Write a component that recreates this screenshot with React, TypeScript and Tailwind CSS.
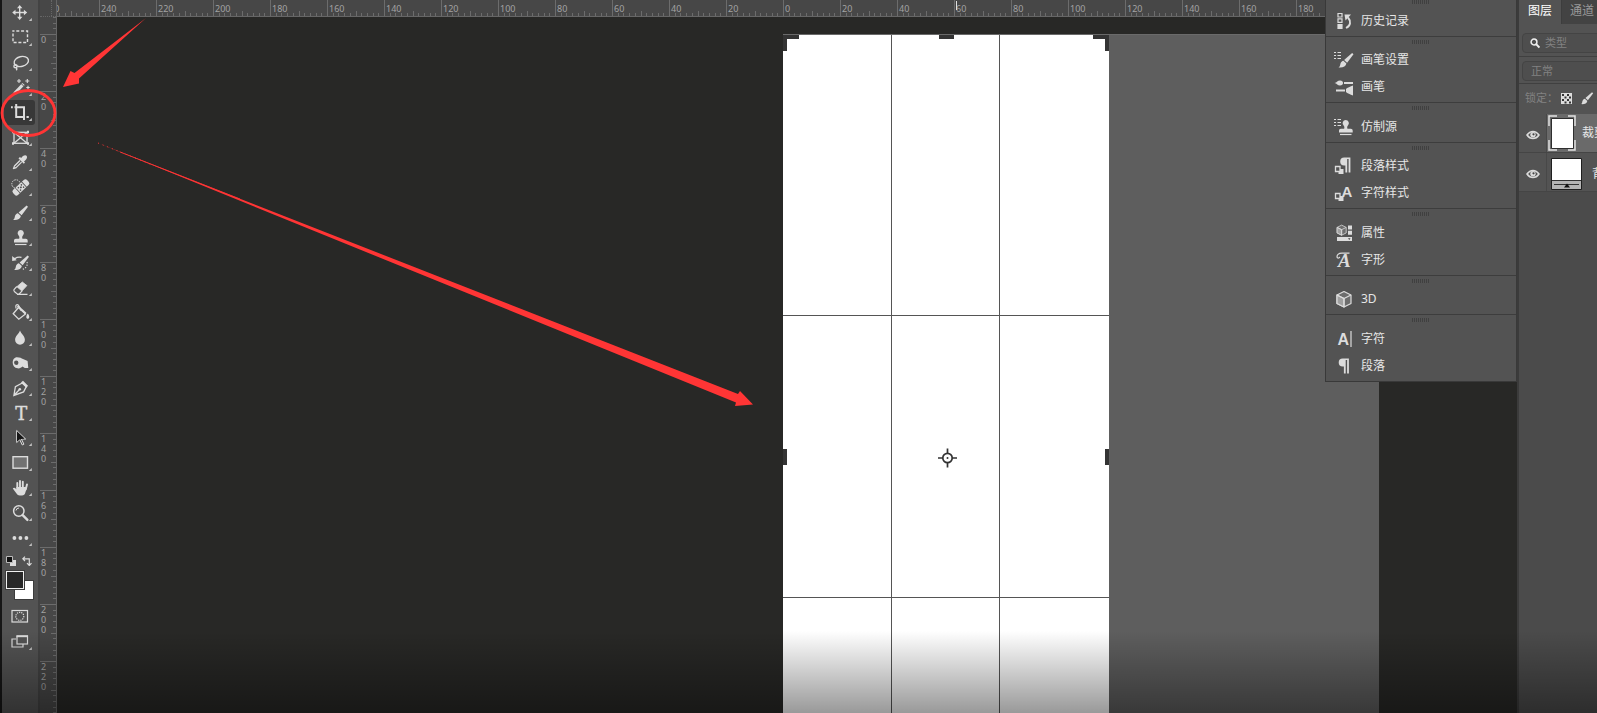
import type { ReactNode } from 'react';
import clsx from 'clsx';

type Item = { label: string; icon: ReactNode };

const INK = '#dcdcdc';
const TICKS = [1, 2, 3, 4, 5, 6, 7, 8, 9];

const brush = (
  <>
    <path d="M24.6 5.4 26 6.8 19.6 15.2 16.6 12.6Z" fill={INK} />
    <path d="M15.9 13.3 18.9 16c-.6 3-3.6 4.4-7.900 3.900 1.700-.6 1.500-2 2-3.800.4-1.600 1.600-2.600 2.900-2.800Z" fill={INK} />
  </>
);

const stamp = (
  <>
    <path d="M18.700 5a3.200 3.200 0 0 1 2.200 5.500c-.8.9-.9 2.300-.4 3.200h3.300c1.200 0 1.900.8 1.900 2V17.500H12V15.700c0-1.200.7-2 1.900-2h3.200c.5-.9.3-2.300-.5-3.200A3.200 3.200 0 0 1 18.700 5Z" fill={INK} />
    <path d="M13 19.500h11.500" stroke={INK} strokeWidth="1.200" />
  </>
);

const tools: Item[] = [
  {
    label: '移动工具',
    icon: (
      <g fill={INK} stroke="none">
        <path d="M17 7h1.400v11H17zM12 11.800h11v1.400H12z" />
        <path d="m17.700 5 2.700 3.300H15zM17.700 20l2.700-3.300H15zM10.200 12.500l3.300-2.700v5.400zM25.200 12.500l-3.300-2.700v5.400z" />
      </g>
    ),
  },
  { label: '矩形选框工具', icon: <rect x="11" y="6" width="14.500" height="11.500" strokeDasharray="3 1.800" strokeDashoffset="1.500" /> },
  {
    label: '套索工具',
    icon: (
      <g strokeWidth="1.400">
        <ellipse cx="19.300" cy="11.500" rx="7.300" ry="4.900" transform="rotate(-14 19.300 11.500)" />
        <circle cx="13.500" cy="16.200" r="1.600" />
        <path d="M14 17.500c1 .7 1 1.800.3 2.700" />
      </g>
    ),
  },
  {
    label: '魔棒工具',
    icon: (
      <>
        <path d="m12.500 18.500 9-9.500" strokeWidth="3.200" />
        <path d="m19.300 8.700 3 3" stroke="#535353" strokeWidth="1" />
        <path d="M17 4v4M15 6h4M25.300 4v4M23.300 6h4M26 10.800v3.400M24.300 12.500h3.400" strokeWidth="1.100" />
      </>
    ),
  },
  {
    label: '裁剪工具',
    icon: <path d="M14.200 4v13H22M9 7.300h1.800M12.500 7.300H22v12.700M24.500 17h2.300" strokeWidth="2" />,
  },
  {
    label: '图框工具',
    icon: (
      <g strokeWidth="1.300">
        <rect x="12" y="7.300" width="13" height="11" />
        <path d="m12 7.300 13 11m0-11-13 11" />
        <path d="M11 5.800v2.500M26 5.800v2.500M11 17.200v2.500M26 17.200v2.500" strokeWidth="2" />
      </g>
    ),
  },
  {
    label: '吸管工具',
    icon: (
      <>
        <path d="M18 10.500 12.500 16c-.5.8-.3 1.600-1.300 2.800 1.300-.7 2-.6 2.900-1.200l5.500-5.500" strokeWidth="1.300" />
        <path d="m16.500 8.500 5.300 5.300 1.200-1.200-1-1.200c2-1.500 3.700-3 2.800-5.300-1.600-1.800-4.300 0-5.600 2l-1.300-1z" fill={INK} stroke="none" />
      </>
    ),
  },
  {
    label: '污点修复画笔工具',
    icon: (
      <>
        <circle cx="14" cy="9" r="4.200" strokeWidth="1" strokeDasharray="1.500 1" />
        <g transform="rotate(-43 18.700 12.300)" stroke="none" fill={INK}>
          <path d="M11.500 9H14v7h-2.500a2.300 2.300 0 0 1-2.300-2.300v-2.400A2.300 2.300 0 0 1 11.500 9ZM23.500 9H26a2.300 2.300 0 0 1 2.300 2.300v2.400A2.300 2.300 0 0 1 26 16h-2.500z" />
          <path d="M14.800 9h7.900v7h-7.900z" />
          <g fill="#535353">
            <circle cx="16.700" cy="11" r=".8" />
            <circle cx="18.800" cy="12.500" r="1" />
            <circle cx="20.900" cy="11" r=".8" />
            <circle cx="16.700" cy="14.200" r=".8" />
            <circle cx="20.900" cy="14.200" r=".8" />
          </g>
        </g>
      </>
    ),
  },
  { label: '画笔工具', icon: <g stroke="none">{brush}</g> },
  { label: '仿制图章工具', icon: <g stroke="none">{stamp}</g> },
  {
    label: '历史记录画笔工具',
    icon: (
      <>
        <g stroke="none" transform="translate(1 0)">{brush}</g>
        <path d="M11 8.300h2.500c1.500-1.300 3.500-1.500 6-1" strokeWidth="1.200" />
        <path d="M10.200 6v5l4.500-.7z" fill={INK} stroke="none" />
        <path d="M25 12c.8 3-.5 6-4.500 7.500" strokeWidth="1.200" strokeDasharray="1.200 1.500" />
      </>
    ),
  },
  {
    label: '橡皮擦工具',
    icon: (
      <>
        <path d="m20.300 7 4.600 3.600-5 5.400-5-4.300z" fill={INK} strokeWidth=".8" />
        <path d="m14.800 11.500-2.400 2.700c-.8.900-.6 1.800.2 2.500l2.700 2.300h1.900l3-3.200M15 19.300h10.500" strokeWidth="1.200" />
      </>
    ),
  },
  {
    label: '油漆桶工具',
    icon: (
      <>
        <path d="m16.500 7.500-5.300 6.300 5.600 5.400 6.700-5.200z" strokeWidth="1.300" />
        <path d="m14 8.500-.2-2.700c.4-1.600 2.400-1.700 3 0l2.400 5" strokeWidth="1.200" />
        <path d="m15.500 6 8.300 7.500" strokeWidth="1.800" />
        <path d="M25.800 13.500c2.200 2.700 1.700 5.300 0 5.300s-2.200-2.600 0-5.300Z" fill={INK} stroke="none" />
      </>
    ),
  },
  { label: '模糊工具', icon: <path d="M18 5.500c1.300 3.500 4.900 5.500 4.900 9.300a4.900 4.900 0 0 1-9.800 0c0-3.800 3.700-5.800 4.900-9.300Z" fill={INK} stroke="none" /> },
  {
    label: '海绵工具',
    icon: <path fillRule="evenodd" d="M15 7.300c3 0 4.500 1 6 1.700l4.600 1.900.7 7.100h-3.500l-2.300-1.400c-1.400 1.400-3.300 2.100-5 1.700-2.900-.5-4.800-2.800-4.800-5.600 0-3.100 1.700-5.400 4.300-5.400Zm-.8 3.200a2.200 2.200 0 1 0 .1 4.400 2.200 2.200 0 0 0-.1-4.400Z" fill={INK} stroke="none" />,
  },
  {
    label: '钢笔工具',
    icon: (
      <>
        <path d="m20.300 8 3.900 3.900-2.600 5-9.700 3.500 1.500-8.800zM12 20.200l5.300-5.500" strokeWidth="1.300" />
        <circle cx="17.800" cy="14.200" r="1.300" fill={INK} stroke="none" />
        <path d="m21 5.800 5 5-1.500 2-5.500-5.300z" fill={INK} stroke="none" />
      </>
    ),
  },
  {
    label: '横排文字工具',
    icon: <text x="19.200" y="19.500" textAnchor="middle" fontFamily="DejaVu Serif, serif" fontSize="18" fill={INK} stroke={INK} strokeWidth=".4">T</text>,
  },
  {
    label: '路径选择工具',
    icon: (
      <>
        <path d="M14.700 5.500v12l3-2.800 2.600 5.300 1.600-.8-2.500-5.200h4.200z" strokeWidth="1" />
        <path d="M15 6.500v10l3-2.500 4.500-.3z" fill="#161616" stroke="none" />
      </>
    ),
  },
  { label: '矩形工具', icon: <rect x="11" y="6.700" width="14.500" height="11.500" fill="#727272" /> },
  {
    label: '抓手工具',
    icon: (
      <>
        <path d="M15.300 13V8M18 13V6M20.800 13V6.700M23.700 14.500l1.300-5" strokeWidth="1.900" strokeLinecap="round" />
        <path d="M14.300 12h9.600l.9.800-1.500 5c-.5 1.700-1.500 2.700-3.300 2.700h-2.200c-1.600 0-2.500-.7-3.300-1.900L10.800 13.500c.8-1.200 2-1 2.800-.1l.8.900z" fill={INK} stroke="none" />
      </>
    ),
  },
  {
    label: '缩放工具',
    icon: (
      <>
        <circle cx="16.800" cy="11" r="5.200" strokeWidth="1.500" />
        <path d="M14 10.500a3 3 0 0 1 3-2.500" strokeWidth="1" />
        <path d="m20.700 15.200 4.700 4.700" strokeWidth="2.400" strokeLinecap="round" />
      </>
    ),
  },
  {
    label: '编辑工具栏',
    icon: (
      <g fill={INK} stroke="none">
        <circle cx="12.400" cy="13" r="1.900" />
        <circle cx="18.400" cy="13" r="1.900" />
        <circle cx="24.400" cy="13" r="1.900" />
      </g>
    ),
  },
];

function ToolIcon({ children, corner = true }: { children: ReactNode; corner?: boolean }) {
  return (
    <svg viewBox="0 0 35 25" className="h-[25px] w-[35px] shrink-0" fill="none" stroke={INK} strokeWidth="1.400">
      {children}
      {corner && <path d="M29.800 18v3h-3z" fill="#c4c4c4" stroke="none" />}
    </svg>
  );
}

function Toolbar() {
  return (
    <nav aria-label="工具" className="flex w-[38px] shrink-0 flex-col border-l-2 border-[#161616] bg-[#535353]">
      {tools.map((t) => (
        <button
          key={t.label}
          type="button"
          aria-label={t.label}
          className={clsx('mx-[2px] h-[25px] w-[31px] shrink-0 rounded-[3px]', t.label === '裁剪工具' && 'bg-[#383838]')}
        >
          <span className="-mx-[2px] flex">
            <ToolIcon>{t.icon}</ToolIcon>
          </span>
        </button>
      ))}
      <div className="flex h-[21px] shrink-0 items-center justify-between pr-[6px] pl-1">
        <button type="button" aria-label="默认前景色和背景色">
          <svg viewBox="0 0 10 10" className="h-[10px] w-[10px]">
            <path d="M4 4h6v6H4z" fill={INK} />
            <path d="M.500.500h6v6h-6z" fill="#111" stroke="#bbb" />
          </svg>
        </button>
        <button type="button" aria-label="切换前景色和背景色">
          <svg viewBox="0 0 10 10" className="h-[10px] w-[10px]" fill="none" stroke={INK} strokeWidth="1.200">
            <path d="M1 2.800h6.300V9M3 .6.800 2.800 3 5M5 7.200 7.300 9.500l2.200-2.300" />
          </svg>
        </button>
      </div>
      <div className="relative h-[33px] shrink-0">
        <button type="button" aria-label="背景色" className="absolute top-[10px] left-[13px] h-[18px] w-[18px] bg-white outline outline-[#3c3c3c]" />
        <button type="button" aria-label="前景色" className="absolute top-0 left-1 h-[18px] w-[18px] border border-[#f0f0f0] bg-[#282828] outline outline-[#3c3c3c]" />
      </div>
      <button type="button" aria-label="以快速蒙版模式编辑" className="shrink-0">
        <ToolIcon corner={false}>
          <rect x="10" y="6.500" width="15.500" height="11.500" strokeWidth="1.200" />
          <circle cx="17.800" cy="12.300" r="4" strokeWidth="1.200" strokeDasharray="1.200 1" />
        </ToolIcon>
      </button>
      <button type="button" aria-label="更改屏幕模式" className="shrink-0">
        <ToolIcon>
          <g strokeWidth="1.200">
            <path d="M14 10h-4v8h11v-3" />
            <rect x="15" y="7" width="10.500" height="8" />
            <path d="M14.500 7.300h11.500" strokeWidth="1.800" />
          </g>
        </ToolIcon>
      </button>
    </nav>
  );
}

function HSegment({ label }: { label: number }) {
  return (
    <div className="relative h-4 w-[57px] shrink-0 border-l border-[#6c6c6c] pt-[3px] pl-px text-[9px] leading-[12px]">
      {label}
      <svg viewBox="0 0 57 16" className="absolute top-0 -left-px h-4 w-[57px]" stroke="#6c6c6c" shapeRendering="crispEdges">
        {TICKS.map((i) => (
          <path key={i} d={`M${Math.round(i * 5.7) + 0.5} ${i === 5 ? 11 : 13}V16`} />
        ))}
      </svg>
    </div>
  );
}

function VSegment({ label }: { label?: number }) {
  return (
    <div className="relative h-[57px] w-4 shrink-0 border-t border-[#6c6c6c] pl-px text-[9px] leading-[10px]">
      {label !== undefined && String(label).split('').map((d, i) => <div key={i}>{d}</div>)}
      <svg viewBox="0 0 16 57" className="absolute -top-px left-0 h-[57px] w-4" stroke="#6c6c6c" shapeRendering="crispEdges">
        {TICKS.map((i) => (
          <path key={i} d={`M${i === 5 ? 11 : 13} ${Math.round(i * 5.7) + 0.5}H16`} />
        ))}
      </svg>
    </div>
  );
}

const hLabels = Array.from({ length: 25 }, (_, i) => Math.abs(240 - i * 20));
const vLabels = Array.from({ length: 12 }, (_, i) => i * 20);

function TopRuler() {
  return (
    <div className="flex h-[17px] shrink-0 overflow-hidden border-b border-[#666] bg-[#474747] text-[#a2a2a2]">
      <div className="flex w-[42px] shrink-0 justify-end overflow-hidden">
        <HSegment label={260} />
      </div>
      {hLabels.map((n, i) => (
        <HSegment key={i} label={n} />
      ))}
    </div>
  );
}

function LeftRuler() {
  return (
    <div className="flex w-[19px] shrink-0 flex-col overflow-hidden border-r border-l-2 border-r-[#666] border-l-[#434343] bg-[#474747] text-[#a2a2a2]">
      <div className="flex h-[17px] shrink-0 items-end justify-end border-b border-dotted border-[#666]">
        <div className="h-full w-[5px] border-l border-dotted border-[#666]" />
      </div>
      <div className="flex h-[17px] shrink-0 flex-col justify-end overflow-hidden">
        <VSegment />
      </div>
      {vLabels.map((n) => (
        <VSegment key={n} label={n} />
      ))}
    </div>
  );
}

function CropBox() {
  return (
    <div className="relative h-[844px] w-[326px] bg-white">
      <div className="grid h-full grid-cols-3 grid-rows-3">
        {Array.from({ length: 9 }, (_, i) => (
          <div key={i} className={clsx('border-[#555]', i % 3 < 2 && 'border-r', i < 6 && 'border-b')} />
        ))}
      </div>
      <svg viewBox="0 0 326 844" className="absolute inset-0 h-full w-full" fill="#343434">
        <path d="M0 0h16v4H4v12H0zM156 0h15v4h-15zM310 0h16v16h-4V4h-12zM0 414h4v16H0zM322 414h4v16h-4z" />
        <g fill="none" stroke="#333" strokeWidth="1.700" transform="translate(164.500 423)">
          <circle r="4.700" />
          <path d="M0-9.500v5M0 4.500v5M-9.500 0h5M4.500 0h5" />
          <circle r="1" fill="#333" stroke="none" />
        </g>
      </svg>
    </div>
  );
}

const boxes = <path d="M1 2.500h2M1 5.500h2M1 8.500h2M4.500 2.500h3.500M4.500 5.500h3.500M4.500 8.500h3.500" strokeWidth="1.200" />;

const cube = (
  <g strokeWidth="1.200" strokeLinejoin="round">
    <path d="M11 2.500 18 6v8.500L11 18l-7-3.500V6z" fill="#6d6d6d" />
    <path d="M4 6v8.500l7 3.500V9.500z" fill="#a0a0a0" />
    <path d="M4 6l7 3.500L18 6M11 9.500V18" />
  </g>
);

const styleMark = (
  <>
    <path d="M5.500 13h5v5h-5z" fill={INK} stroke="none" />
    <path d="M2.500 10.500h4.500v5H2.500z" fill="#535353" strokeWidth="1.300" />
  </>
);

const pilcrow = <path d="M13.500 2.500H9.700a4 4 0 0 0 0 8h1.200V17.500h1.800V4h1.400v13.500h1.800V2.500z" fill={INK} stroke="none" />;

const panelGroups: Item[][] = [
  [
    {
      label: '历史记录',
      icon: (
        <>
          <path d="M5 2.500h4v3.500H5zM5 7.800h4v3.500H5z" strokeWidth="1.200" />
          <path d="M4.400 13h5.200v5H4.400z" fill={INK} stroke="none" />
          <path d="M13 17c4.500-2 5.500-6.500 2-10.500" strokeWidth="1.900" />
          <path d="M11.500 3.500h6.500l-5.500 6z" fill={INK} stroke="none" />
        </>
      ),
    },
  ],
  [
    { label: '画笔设置', icon: <>{boxes}<g transform="translate(-5.500 -2.500)" stroke="none">{brush}</g></> },
    {
      label: '画笔',
      icon: (
        <path
          d="M1.500 6c2.500-.5 3-2.500 5.500-2.500 2 0 3 1.200 3 2.500S9 8.500 7 8.500C4.500 8.500 4 6.500 1.500 6ZM11 5h9v2h-9zM3 12.500h9v2H3zM20 8.500v10c-2.500-1.200-6-2-7-3.500v-3c1-1.500 4.500-2.300 7-3.500Z"
          fill={INK}
          stroke="none"
        />
      ),
    },
  ],
  [{ label: '仿制源', icon: <>{boxes}<g transform="translate(-6 -2)" stroke="none">{stamp}</g></> }],
  [
    { label: '段落样式', icon: <>{styleMark}<g transform="translate(1.500 -1)">{pilcrow}</g></> },
    {
      label: '字符样式',
      icon: (
        <>
          {styleMark}
          <text x="8.500" y="14" fontFamily="Liberation Sans, sans-serif" fontWeight="bold" fontSize="15" fill={INK} stroke="none">A</text>
        </>
      ),
    },
  ],
  [
    {
      label: '属性',
      icon: (
        <>
          <g transform="translate(1.500 .5) scale(.65)">{cube}</g>
          <path d="M15 2.500h4v4h-4zM15 7.800h4v4h-4zM4 14h15v4H4z" fill={INK} stroke="none" />
          <path d="M15 15.300h2.500l-1.200 1.700z" fill="#444" stroke="none" />
        </>
      ),
    },
    {
      label: '字形',
      icon: (
        <>
          <text x="5" y="16.500" fontFamily="Liberation Serif, serif" fontStyle="italic" fontWeight="bold" fontSize="19" fill={INK} stroke="none">A</text>
          <path d="M16.500 3.200H9C5.500 3.200 3.500 5 4.200 7.500c1 1 2.300.5 2.500-.7" strokeWidth="1.200" />
        </>
      ),
    },
  ],
  [{ label: '3D', icon: cube }],
  [
    {
      label: '字符',
      icon: (
        <>
          <text x="4.500" y="15.500" fontFamily="Liberation Sans, sans-serif" fontWeight="bold" fontSize="16" fill={INK} stroke="none">A</text>
          <path d="M18 2v16" strokeWidth="1.200" />
        </>
      ),
    },
    { label: '段落', icon: pilcrow },
  ],
];

function PanelMenu() {
  return (
    <div className="absolute -top-[3px] right-0 z-10 flex h-[385px] w-[192px] flex-col border border-t-0 border-[#393939] bg-[#535353]">
      {panelGroups.map((group, i) => (
        <section key={i} className={clsx('flex grow flex-col pb-px', i > 0 && 'border-t border-[#3d3d3d]')}>
          <div className="flex h-[10px] items-center justify-center">
            <div className="h-1 w-[18px] bg-[repeating-linear-gradient(90deg,#404040_0_1px,transparent_1px_2px)]" />
          </div>
          {group.map((item) => (
            <button key={item.label} type="button" className="flex h-[27px] items-center gap-[6px] pl-[7px] text-[12px] leading-4 text-[#e6e6e6]">
              <svg viewBox="0 0 22 20" className="h-5 w-[22px]" fill="none" stroke={INK}>
                {item.icon}
              </svg>
              {item.label}
            </button>
          ))}
        </section>
      ))}
    </div>
  );
}

function Workspace() {
  return (
    <main className="relative flex min-w-0 flex-1 flex-col overflow-hidden">
      <TopRuler />
      <div className="relative min-h-0 flex-1 overflow-hidden bg-[#282826] pt-[17px]">
        <div className="ml-[726px] w-[596px] border-t border-[#6a6a6a] bg-[#5e5e5e]">
          <CropBox />
        </div>
      </div>
      <PanelMenu />
    </main>
  );
}

function Eye() {
  return (
    <button type="button" aria-label="切换可见性" className="flex w-[28px] shrink-0 items-center justify-center border-r border-[#484848] pt-[3px]">
      <svg viewBox="0 0 14 10" className="h-[10px] w-[14px]">
        <path d="M1 5c3.200-4.700 8.800-4.700 12 0-3.200 4.700-8.800 4.700-12 0Z" fill="#535353" stroke={INK} strokeWidth="1.500" />
        <circle cx="7" cy="4.800" r="2.700" fill={INK} />
        <circle cx="7.500" cy="4.300" r="1.100" fill="#444" />
      </svg>
    </button>
  );
}

function LayersPanel() {
  return (
    <aside className="w-[80px] shrink-0 overflow-hidden border-l-2 border-[#3b3b3b] bg-[#4b4b4b] text-[12px] leading-4 whitespace-nowrap text-[#e6e6e6]">
      <div className="flex h-6 bg-[#434343]">
        <button type="button" className="w-[42px] shrink-0 bg-[#535353] pb-[2px] text-white">图层</button>
        <button type="button" className="w-10 shrink-0 border-l border-[#3d3d3d] pb-[2px] pl-2 text-left text-[#999]">通道</button>
      </div>
      <div className="bg-[#535353]">
        <label className="block border-b border-[#404040] pt-[9px] pb-[3px] pl-[3px]">
          <span className="flex h-[20px] w-[120px] items-center gap-[5px] rounded-sm border border-[#444] bg-[#4e4e4e] pl-[7px]">
            <svg viewBox="0 0 12 12" className="h-3 w-[10px] shrink-0" fill="none" stroke="#f0f0f0" strokeWidth="1.800">
              <circle cx="4.800" cy="4.800" r="3.500" />
              <path d="m7.500 7.500 3.800 4" strokeWidth="2.200" />
            </svg>
            <select aria-label="图层筛选" className="w-20 appearance-none text-[11px] text-[#828282]">
              <option>类型</option>
            </select>
          </span>
        </label>
        <div className="border-b border-[#404040] pt-1 pb-[2px] pl-[3px]">
          <select aria-label="混合模式" className="block h-[20px] w-[120px] appearance-none rounded-sm border border-[#444] bg-[#4e4e4e] pl-2 text-[11px] text-[#828282]">
            <option>正常</option>
          </select>
        </div>
        <div className="flex h-[30px] items-center gap-2 pb-[2px] pl-[6px] text-[11px] text-[#828282]">
          <span className="w-[28px] shrink-0">锁定：</span>
          <button type="button" aria-label="锁定透明像素" className="shrink-0">
            <svg viewBox="0 0 11 11" className="h-[11px] w-[11px]">
              <path d="M0 0h11v11H0z" fill={INK} />
              <path d="M1 1h2v2H1zM6 1h2v2H6zM3.500 3.500h2v2h-2zM8 3.500h2v2H8zM1 6h2v2H1zM6 6h2v2H6zM3.500 8.500h2v2h-2zM8 8.500h2v2H8z" fill="#333" />
            </svg>
          </button>
          <button type="button" aria-label="锁定图像像素" className="shrink-0">
            <svg viewBox="10 4 17 17" className="h-[14px] w-[14px]">{brush}</svg>
          </button>
        </div>
        <div className="flex h-[39px] border-b border-[#454545]">
          <Eye />
          <div className="flex w-40 shrink-0 items-center gap-[6px] bg-[#6a6a6a] pl-px">
            <svg viewBox="0 0 28 36" className="h-9 w-7 shrink-0">
              <path d="M3.500 3.500h22v30h-22z" fill="#fff" stroke="#2e2e2e" />
              <path d="M1 11V1h8M20 1h7v10M27 25v10h-7M9 35H1V25" fill="none" stroke="#e4e4e4" strokeWidth="1.500" />
            </svg>
            裁剪预览
          </div>
        </div>
        <div className="flex h-[39px] border-b border-[#454545]">
          <Eye />
          <div className="flex w-40 shrink-0 items-center gap-[10px] pt-[3px] pl-1">
            <svg viewBox="0 0 31 32" className="h-8 w-[31px] shrink-0">
              <path d="M.5.500h30v31H.500z" fill="#b4b4b4" stroke="#1f1f1f" />
              <path d="M1 1h29v21H1z" fill="#fff" />
              <path d="M1 22.500h29M3 26.500h25" stroke="#333" />
              <path d="m16 25.500 3 4h-6z" fill="#111" />
            </svg>
            背景
          </div>
        </div>
      </div>
    </aside>
  );
}

function Annotations() {
  return (
    <svg className="pointer-events-none absolute inset-0 z-20 h-full w-full">
      <g fill="#ff3535">
        <path d="M146 18 79 78.500V83.500L63 87 70.500 71 74.500 73Z" />
        <path d="M98 143 738 394 740 391 753 404.500 735 406 736 402.500Z" />
      </g>
      <path d="M98 143 150 164" stroke="#ff3535" strokeDasharray="1 4" />
      <path d="M120 152 240 199" stroke="#ff3535" strokeWidth=".8" />
      <ellipse cx="28.500" cy="113" rx="26.500" ry="22.500" fill="none" stroke="#ff3535" strokeWidth="2.800" />
      <path d="M956.500 1v9" stroke="#e0e0e0" />
    </svg>
  );
}

export default function App() {
  return (
    <div className="relative flex h-screen overflow-hidden bg-[#282826] font-['Noto_Sans','Noto_Sans_CJK_SC',sans-serif]">
      <Toolbar />
      <LeftRuler />
      <Workspace />
      <LayersPanel />
      <Annotations />
      <div className="pointer-events-none absolute inset-x-0 bottom-0 z-30 h-[82px] bg-linear-to-b from-transparent to-black/40" />
    </div>
  );
}
